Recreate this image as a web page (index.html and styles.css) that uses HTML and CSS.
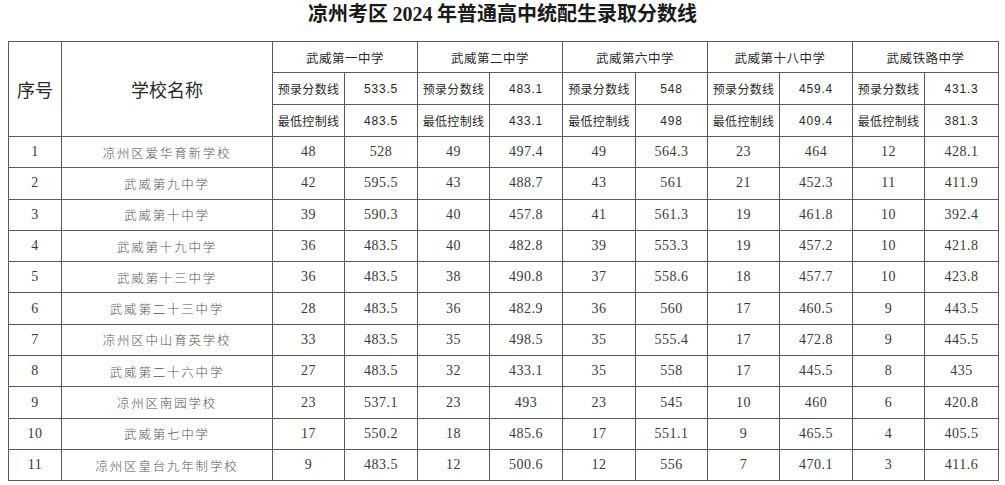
FILE: index.html
```html
<!DOCTYPE html>
<html lang="zh">
<head>
<meta charset="utf-8">
<title>凉州考区 2024 年普通高中统配生录取分数线</title>
<link rel="stylesheet" href="styles.css">
</head>
<body>
<div class="page">
  <h1 class="title"><span class="cjk">凉州考区</span> <span class="num">2024</span> <span class="cjk">年普通高中统配生录取分数线</span></h1>
  <table class="scores">
    <colgroup>
      <col class="c-idx"><col class="c-name">
      <col class="c-a"><col class="c-b"><col class="c-a"><col class="c-b">
      <col class="c-b"><col class="c-a"><col class="c-a"><col class="c-b">
      <col class="c-a"><col class="c-c">
    </colgroup>
    <thead>
      <tr class="h1">
        <th rowspan="3" class="big">序号</th>
        <th rowspan="3" class="big">学校名称</th>
        <th colspan="2" class="school">武威第一中学</th>
        <th colspan="2" class="school">武威第二中学</th>
        <th colspan="2" class="school">武威第六中学</th>
        <th colspan="2" class="school">武威第十八中学</th>
        <th colspan="2" class="school">武威铁路中学</th>
      </tr>
      <tr class="h2">
        <th class="lbl">预录分数线</th><th class="hv">533.5</th>
        <th class="lbl">预录分数线</th><th class="hv">483.1</th>
        <th class="lbl">预录分数线</th><th class="hv">548</th>
        <th class="lbl">预录分数线</th><th class="hv">459.4</th>
        <th class="lbl">预录分数线</th><th class="hv">431.3</th>
      </tr>
      <tr class="h3">
        <th class="lbl">最低控制线</th><th class="hv">483.5</th>
        <th class="lbl">最低控制线</th><th class="hv">433.1</th>
        <th class="lbl">最低控制线</th><th class="hv">498</th>
        <th class="lbl">最低控制线</th><th class="hv">409.4</th>
        <th class="lbl">最低控制线</th><th class="hv">381.3</th>
      </tr>
    </thead>
    <tbody>
      <tr><td>1</td><td class="name">凉州区爱华育新学校</td><td>48</td><td>528</td><td>49</td><td>497.4</td><td>49</td><td>564.3</td><td>23</td><td>464</td><td>12</td><td>428.1</td></tr>
      <tr><td>2</td><td class="name">武威第九中学</td><td>42</td><td>595.5</td><td>43</td><td>488.7</td><td>43</td><td>561</td><td>21</td><td>452.3</td><td>11</td><td>411.9</td></tr>
      <tr><td>3</td><td class="name">武威第十中学</td><td>39</td><td>590.3</td><td>40</td><td>457.8</td><td>41</td><td>561.3</td><td>19</td><td>461.8</td><td>10</td><td>392.4</td></tr>
      <tr><td>4</td><td class="name">武威第十九中学</td><td>36</td><td>483.5</td><td>40</td><td>482.8</td><td>39</td><td>553.3</td><td>19</td><td>457.2</td><td>10</td><td>421.8</td></tr>
      <tr><td>5</td><td class="name">武威第十三中学</td><td>36</td><td>483.5</td><td>38</td><td>490.8</td><td>37</td><td>558.6</td><td>18</td><td>457.7</td><td>10</td><td>423.8</td></tr>
      <tr><td>6</td><td class="name">武威第二十三中学</td><td>28</td><td>483.5</td><td>36</td><td>482.9</td><td>36</td><td>560</td><td>17</td><td>460.5</td><td>9</td><td>443.5</td></tr>
      <tr><td>7</td><td class="name">凉州区中山育英学校</td><td>33</td><td>483.5</td><td>35</td><td>498.5</td><td>35</td><td>555.4</td><td>17</td><td>472.8</td><td>9</td><td>445.5</td></tr>
      <tr><td>8</td><td class="name">武威第二十六中学</td><td>27</td><td>483.5</td><td>32</td><td>433.1</td><td>35</td><td>558</td><td>17</td><td>445.5</td><td>8</td><td>435</td></tr>
      <tr><td>9</td><td class="name">凉州区南园学校</td><td>23</td><td>537.1</td><td>23</td><td>493</td><td>23</td><td>545</td><td>10</td><td>460</td><td>6</td><td>420.8</td></tr>
      <tr><td>10</td><td class="name">武威第七中学</td><td>17</td><td>550.2</td><td>18</td><td>485.6</td><td>17</td><td>551.1</td><td>9</td><td>465.5</td><td>4</td><td>405.5</td></tr>
      <tr><td>11</td><td class="name">凉州区皇台九年制学校</td><td>9</td><td>483.5</td><td>12</td><td>500.6</td><td>12</td><td>556</td><td>7</td><td>470.1</td><td>3</td><td>411.6</td></tr>
    </tbody>
  </table>
</div>
</body>
</html>
```
FILE: styles.css
```css
html, body {
  margin: 0;
  padding: 0;
  background: #ffffff;
}
.page {
  padding: 0 8px;
}
.title {
  margin: 0 0 15px 0;
  height: 26px;
  line-height: 26px;
  text-align: center;
  font-size: 20px;
  font-weight: 700;
  color: #1a1a1a;
  font-family: "Noto Sans CJK SC", "Liberation Serif", serif;
}
.title .num {
  font-family: "Liberation Serif", serif;
  font-weight: 700;
}
.scores {
  border-collapse: collapse;
  table-layout: fixed;
  width: 990px;
  border: 1px solid #555;
}
.c-idx { width: 53px; }
.c-name { width: 211px; }
.c-a { width: 72px; }
.c-b { width: 73px; }
.c-c { width: 74px; }
.scores th,
.scores td {
  border: 1px solid #5a5a5a;
  padding: 0;
  text-align: center;
  vertical-align: middle;
}
.scores th {
  font-weight: 400;
  color: #2a2a2a;
  font-family: "Noto Sans CJK SC", sans-serif;
}
.h1 { height: 31px; }
.h2 { height: 32px; }
.h3 { height: 32px; }
.big {
  font-size: 18px;
  color: #1e1e1e;
}
.school {
  font-size: 12.5px;
  letter-spacing: 0.5px;
}
.lbl {
  font-size: 12px;
  letter-spacing: 0.3px;
}
.hv {
  font-size: 12px;
  font-family: "Liberation Sans", sans-serif !important;
  letter-spacing: 0.8px;
}
.scores tbody tr {
  height: 31.3px;
}
.scores td {
  font-family: "Liberation Serif", serif;
  font-size: 14px;
  color: #3a3a3a;
  letter-spacing: 0.5px;
}
.scores td.name {
  font-family: "Noto Sans CJK SC", sans-serif;
  font-weight: 300;
  font-size: 12.5px;
  letter-spacing: 1.8px;
  color: #555;
}
```
